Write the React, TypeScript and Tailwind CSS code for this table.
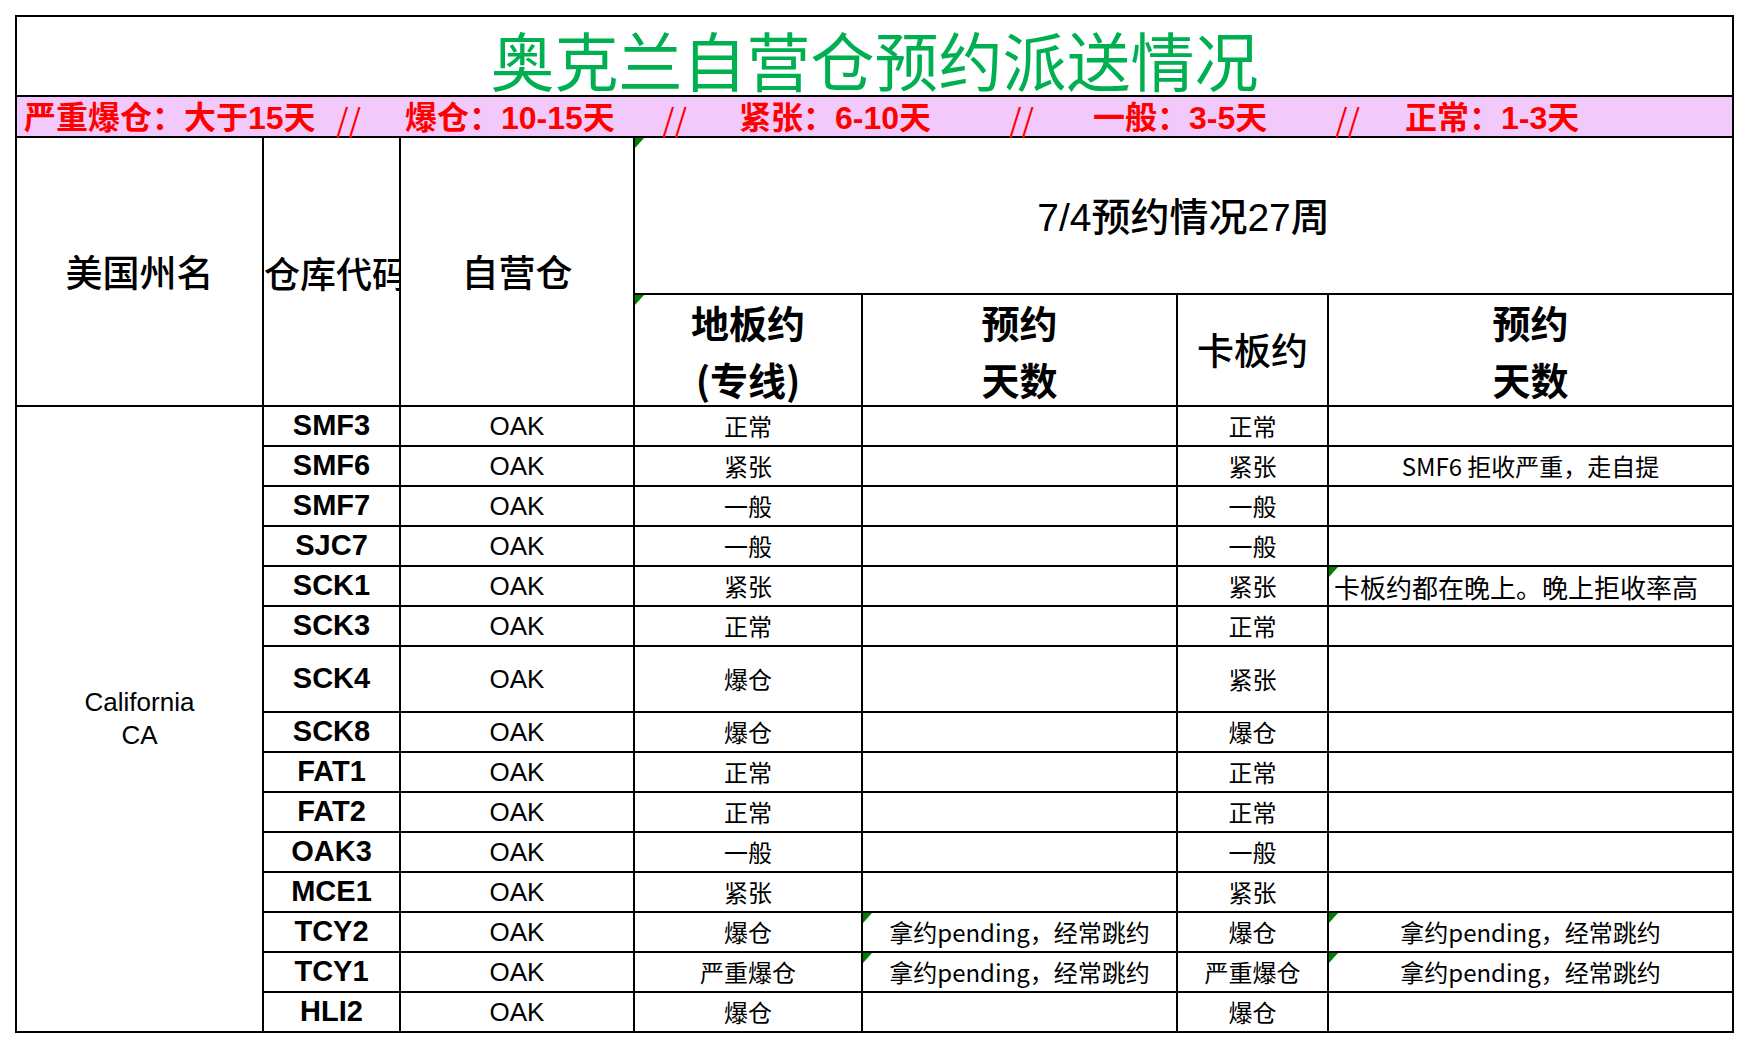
import React from 'react';

type Row = {
  code: string;
  floor: string;
  floorNote?: string;
  pallet: string;
  palletNote?: string;
  flagFloorNote?: boolean;
  flagPalletNote?: boolean;
  leftNote?: boolean;
};

const rows: Row[] = [
  { code: 'SMF3', floor: '正常', pallet: '正常' },
  { code: 'SMF6', floor: '紧张', pallet: '紧张', palletNote: 'SMF6 拒收严重，走自提' },
  { code: 'SMF7', floor: '一般', pallet: '一般' },
  { code: 'SJC7', floor: '一般', pallet: '一般' },
  { code: 'SCK1', floor: '紧张', pallet: '紧张', palletNote: '卡板约都在晚上。晚上拒收率高', flagPalletNote: true, leftNote: true },
  { code: 'SCK3', floor: '正常', pallet: '正常' },
  { code: 'SCK4', floor: '爆仓', pallet: '紧张' },
  { code: 'SCK8', floor: '爆仓', pallet: '爆仓' },
  { code: 'FAT1', floor: '正常', pallet: '正常' },
  { code: 'FAT2', floor: '正常', pallet: '正常' },
  { code: 'OAK3', floor: '一般', pallet: '一般' },
  { code: 'MCE1', floor: '紧张', pallet: '紧张' },
  { code: 'TCY2', floor: '爆仓', floorNote: '拿约pending，经常跳约', pallet: '爆仓', palletNote: '拿约pending，经常跳约', flagFloorNote: true, flagPalletNote: true },
  { code: 'TCY1', floor: '严重爆仓', floorNote: '拿约pending，经常跳约', pallet: '严重爆仓', palletNote: '拿约pending，经常跳约', flagFloorNote: true, flagPalletNote: true },
  { code: 'HLI2', floor: '爆仓', pallet: '爆仓' },
];

const cjk = "[font-family:'Noto_Sans_CJK_SC',sans-serif]";
const mixed = "[font-family:'Liberation_Sans','Noto_Sans_CJK_SC',sans-serif]";

// legend band: fixed-width slots so each label starts where the sheet puts it
const legend = [
  { text: '严重爆仓：大于15天', cls: `w-[312px] ${mixed}` },
  { text: '//', cls: `w-[69px] ${cjk} font-normal` },
  { text: '爆仓：10-15天', cls: `w-[257px] ${mixed}` },
  { text: '//', cls: `w-[77px] ${cjk} font-normal` },
  { text: '紧张：6-10天', cls: `w-[270px] ${mixed}` },
  { text: '//', cls: `w-[84px] ${cjk} font-normal` },
  { text: '一般：3-5天', cls: `w-[242px] ${mixed}` },
  { text: '//', cls: `w-[70px] ${cjk} font-normal` },
  { text: '正常：1-3天', cls: `w-[300px] ${mixed}` },
];

function Flag() {
  return (
    <span className="absolute left-0 top-0 h-[10px] w-[9px] bg-[#008000] [clip-path:polygon(0_0,100%_0,0_100%)]" />
  );
}

function Cell({ children, className = '' }: { children?: React.ReactNode; className?: string }) {
  return (
    <div className={`relative flex items-center justify-center bg-white text-center ${className}`}>
      {children}
    </div>
  );
}

export default function App() {
  return (
    <div className="min-h-screen bg-white pl-[15px] pt-[15px] text-black">
      <div className="grid w-fit gap-[2px] bg-black p-[2px] grid-cols-[245px_135px_232px_226px_313px_149px_403px] grid-rows-[78px_39px_155px_110px_repeat(6,38px)_64px_repeat(8,38px)]">
        {/* title */}
        <Cell className={`col-span-7 ${cjk} pt-[4px] text-[64px] leading-none text-[#00b050]`}>
          奥克兰自营仓预约派送情况
        </Cell>

        {/* legend band */}
        <div className="col-span-7 flex items-center bg-[#f2c9fb] pl-[7px] pt-[3px] text-[32px] font-bold leading-none text-[#ff0000]">
          {legend.map((s, i) => (
            <span key={i} className={`${s.cls} shrink-0 whitespace-nowrap`}>
              {s.text}
            </span>
          ))}
        </div>

        {/* header */}
        <Cell className={`[grid-row:span_2/span_2] ${cjk} text-[37px] font-medium`}>美国州名</Cell>
        <Cell className={`[grid-row:span_2/span_2] justify-start overflow-hidden whitespace-nowrap ${cjk} text-[36px] font-medium`}>
          仓库代码
        </Cell>
        <Cell className={`[grid-row:span_2/span_2] ${cjk} text-[37px] font-medium`}>自营仓</Cell>
        <Cell className={`col-span-4 pt-[6px] ${mixed} text-[39px] font-medium`}>
          <Flag />
          7/4预约情况27周
        </Cell>

        <Cell className={`${cjk} text-[38px] font-bold leading-[57px]`}>
          <Flag />
          <span>
            地板约
            <br />
            (专线)
          </span>
        </Cell>
        <Cell className={`${cjk} text-[38px] font-bold leading-[57px]`}>
          <span>
            预约
            <br />
            天数
          </span>
        </Cell>
        <Cell className={`${cjk} text-[37px] font-medium`}>卡板约</Cell>
        <Cell className={`${cjk} text-[38px] font-bold leading-[57px]`}>
          <span>
            预约
            <br />
            天数
          </span>
        </Cell>

        {/* body */}
        <Cell className="[grid-row:span_15/span_15] [font-family:'Liberation_Sans',sans-serif] text-[26px] leading-[33px]">
          <span>
            California
            <br />
            CA
          </span>
        </Cell>

        {rows.map((r) => (
          <React.Fragment key={r.code}>
            <Cell className="[font-family:'Liberation_Sans',sans-serif] text-[29px] font-bold">{r.code}</Cell>
            <Cell className="[font-family:'Liberation_Sans',sans-serif] text-[26px]">OAK</Cell>
            <Cell className={`${cjk} text-[24px]`}>{r.floor}</Cell>
            <Cell className={`${cjk} text-[24px] whitespace-nowrap`}>
              {r.flagFloorNote && <Flag />}
              {r.floorNote}
            </Cell>
            <Cell className={`${cjk} text-[24px]`}>{r.pallet}</Cell>
            {r.leftNote ? (
              <Cell className={`justify-start pl-[5px] ${cjk} text-[26px] whitespace-nowrap`}>
                {r.flagPalletNote && <Flag />}
                {r.palletNote}
              </Cell>
            ) : (
              <Cell className={`${cjk} text-[24px] whitespace-nowrap`}>
                {r.flagPalletNote && <Flag />}
                {r.palletNote}
              </Cell>
            )}
          </React.Fragment>
        ))}
      </div>
    </div>
  );
}
